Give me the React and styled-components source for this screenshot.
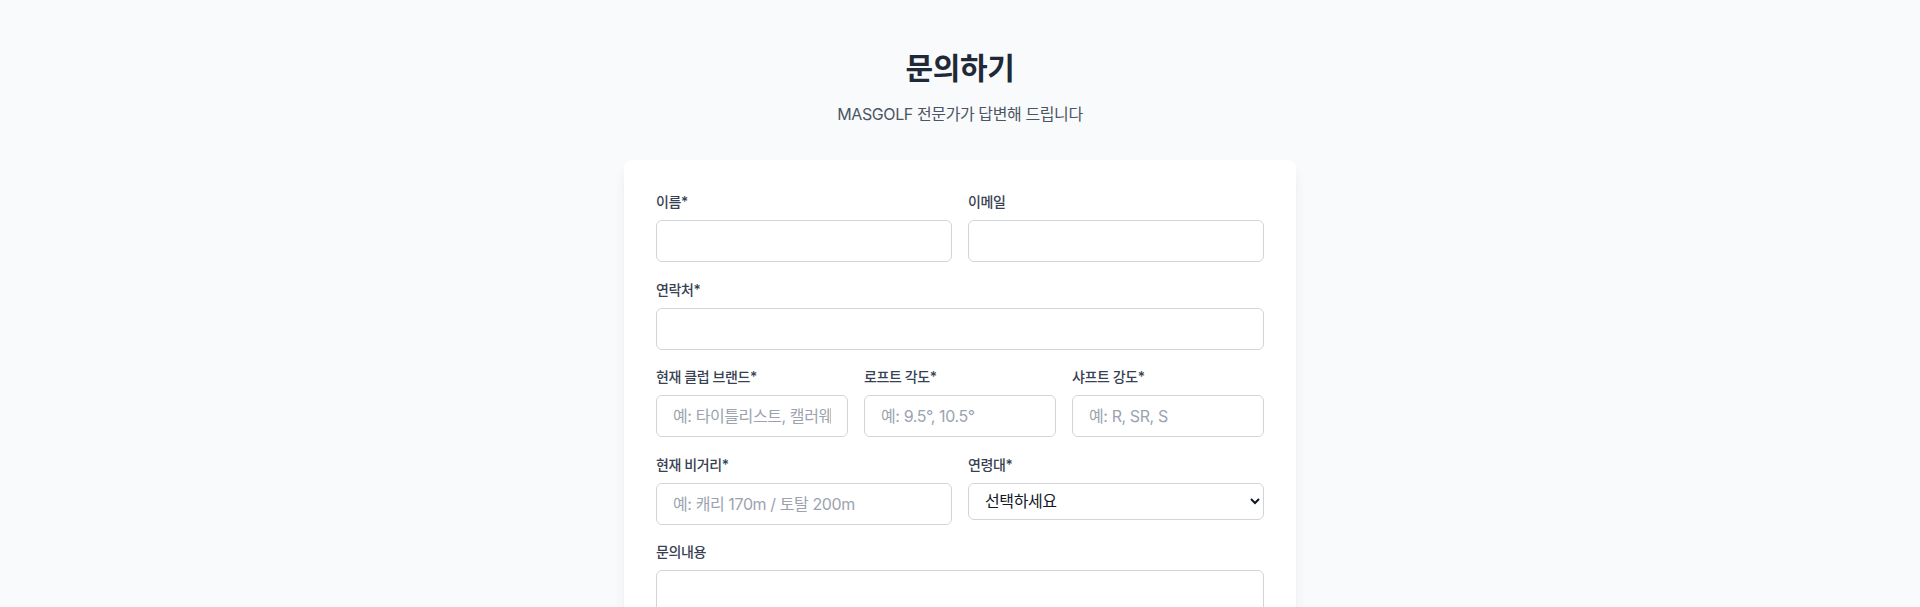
import React from "react";
import styled, { createGlobalStyle } from "styled-components";

const GlobalStyle = createGlobalStyle`
  html, body { margin: 0; padding: 0; }
  body {
    background: #f9fafb;
    font-family: Inter, "Noto Sans CJK KR", "Noto Sans", sans-serif;
    color: #1f2937;
    letter-spacing: -0.025em;
  }
  ::-webkit-scrollbar { display: none; }
  * { box-sizing: border-box; }
`;

const Page = styled.main`
  min-height: 100vh;
  padding: 50px 16px 48px;
`;

const Container = styled.div`
  max-width: 672px;
  margin: 0 auto;
`;

const Header = styled.header`
  text-align: center;
  margin-bottom: 34px;
`;

const Title = styled.h1`
  margin: 0 0 16px;
  font-size: 30px;
  line-height: 36px;
  font-weight: 700;
  color: #1f2937;
`;

const Subtitle = styled.p`
  margin: 0;
  font-size: 16px;
  line-height: 24px;
  color: #4b5563;
`;

const Card = styled.section`
  background: #ffffff;
  border-radius: 8px;
  box-shadow: 0 10px 15px -3px rgba(0, 0, 0, 0.08), 0 4px 6px -4px rgba(0, 0, 0, 0.08);
  padding: 32px;
`;

const Form = styled.form`
  display: flex;
  flex-direction: column;
  gap: 17.5px;
`;

const Row = styled.div`
  display: grid;
  grid-template-columns: repeat(${(p) => p.$cols || 1}, minmax(0, 1fr));
  gap: 16px;
  align-items: start;
`;

const Field = styled.div`
  display: flex;
  flex-direction: column;
  min-width: 0;
`;

const Label = styled.label`
  display: block;
  font-size: 14px;
  line-height: 20px;
  font-weight: 500;
  color: #374151;
  margin-bottom: 8px;
`;

const fieldBase = `
  width: 100%;
  border: 1px solid #d1d5db;
  border-radius: 6px;
  background: #ffffff;
  font-family: Inter, "Noto Sans CJK KR", "Noto Sans", sans-serif;
  font-size: 16px;
  letter-spacing: -0.025em;
  color: #111827;
  outline: none;
  &::placeholder { color: #9ca3af; opacity: 1; }
`;

const Input = styled.input`
  ${fieldBase}
  height: 42px;
  padding: 8px 16px;
  line-height: 24px;
`;

const Select = styled.select`
  ${fieldBase}
  height: 37px;
  padding: 0 10px 0 12px;
  line-height: 20px;
`;

const TextArea = styled.textarea`
  ${fieldBase}
  padding: 8px 16px;
  line-height: 24px;
  resize: vertical;
`;

const SubmitButton = styled.button`
  width: 100%;
  padding: 12px 16px;
  border: none;
  border-radius: 6px;
  background: #2563eb;
  color: #ffffff;
  font-family: inherit;
  font-size: 16px;
  font-weight: 600;
`;

function TextField({ label, required, placeholder, type = "text" }) {
  return (
    <Field>
      <Label>
        {label}
        {required ? "*" : ""}
      </Label>
      <Input type={type} placeholder={placeholder} />
    </Field>
  );
}

export default function App() {
  return (
    <>
      <GlobalStyle />
      <Page>
        <Container>
          <Header>
            <Title>문의하기</Title>
            <Subtitle>MASGOLF 전문가가 답변해 드립니다</Subtitle>
          </Header>
          <Card>
            <Form onSubmit={(e) => e.preventDefault()}>
              <Row $cols={2}>
                <TextField label="이름" required />
                <TextField label="이메일" type="email" />
              </Row>
              <TextField label="연락처" required type="tel" />
              <Row $cols={3}>
                <TextField label="현재 클럽 브랜드" required placeholder="예: 타이틀리스트, 캘러웨이" />
                <TextField label="로프트 각도" required placeholder="예: 9.5°, 10.5°" />
                <TextField label="샤프트 강도" required placeholder="예: R, SR, S" />
              </Row>
              <Row $cols={2}>
                <TextField label="현재 비거리" required placeholder="예: 캐리 170m / 토탈 200m" />
                <Field>
                  <Label>연령대*</Label>
                  <Select defaultValue="">
                    <option value="">선택하세요</option>
                    <option value="20">20대</option>
                    <option value="30">30대</option>
                    <option value="40">40대</option>
                    <option value="50">50대</option>
                    <option value="60">60대 이상</option>
                  </Select>
                </Field>
              </Row>
              <Field>
                <Label>문의내용</Label>
                <TextArea rows={4} />
              </Field>
              <SubmitButton type="submit">문의하기</SubmitButton>
            </Form>
          </Card>
        </Container>
      </Page>
    </>
  );
}
